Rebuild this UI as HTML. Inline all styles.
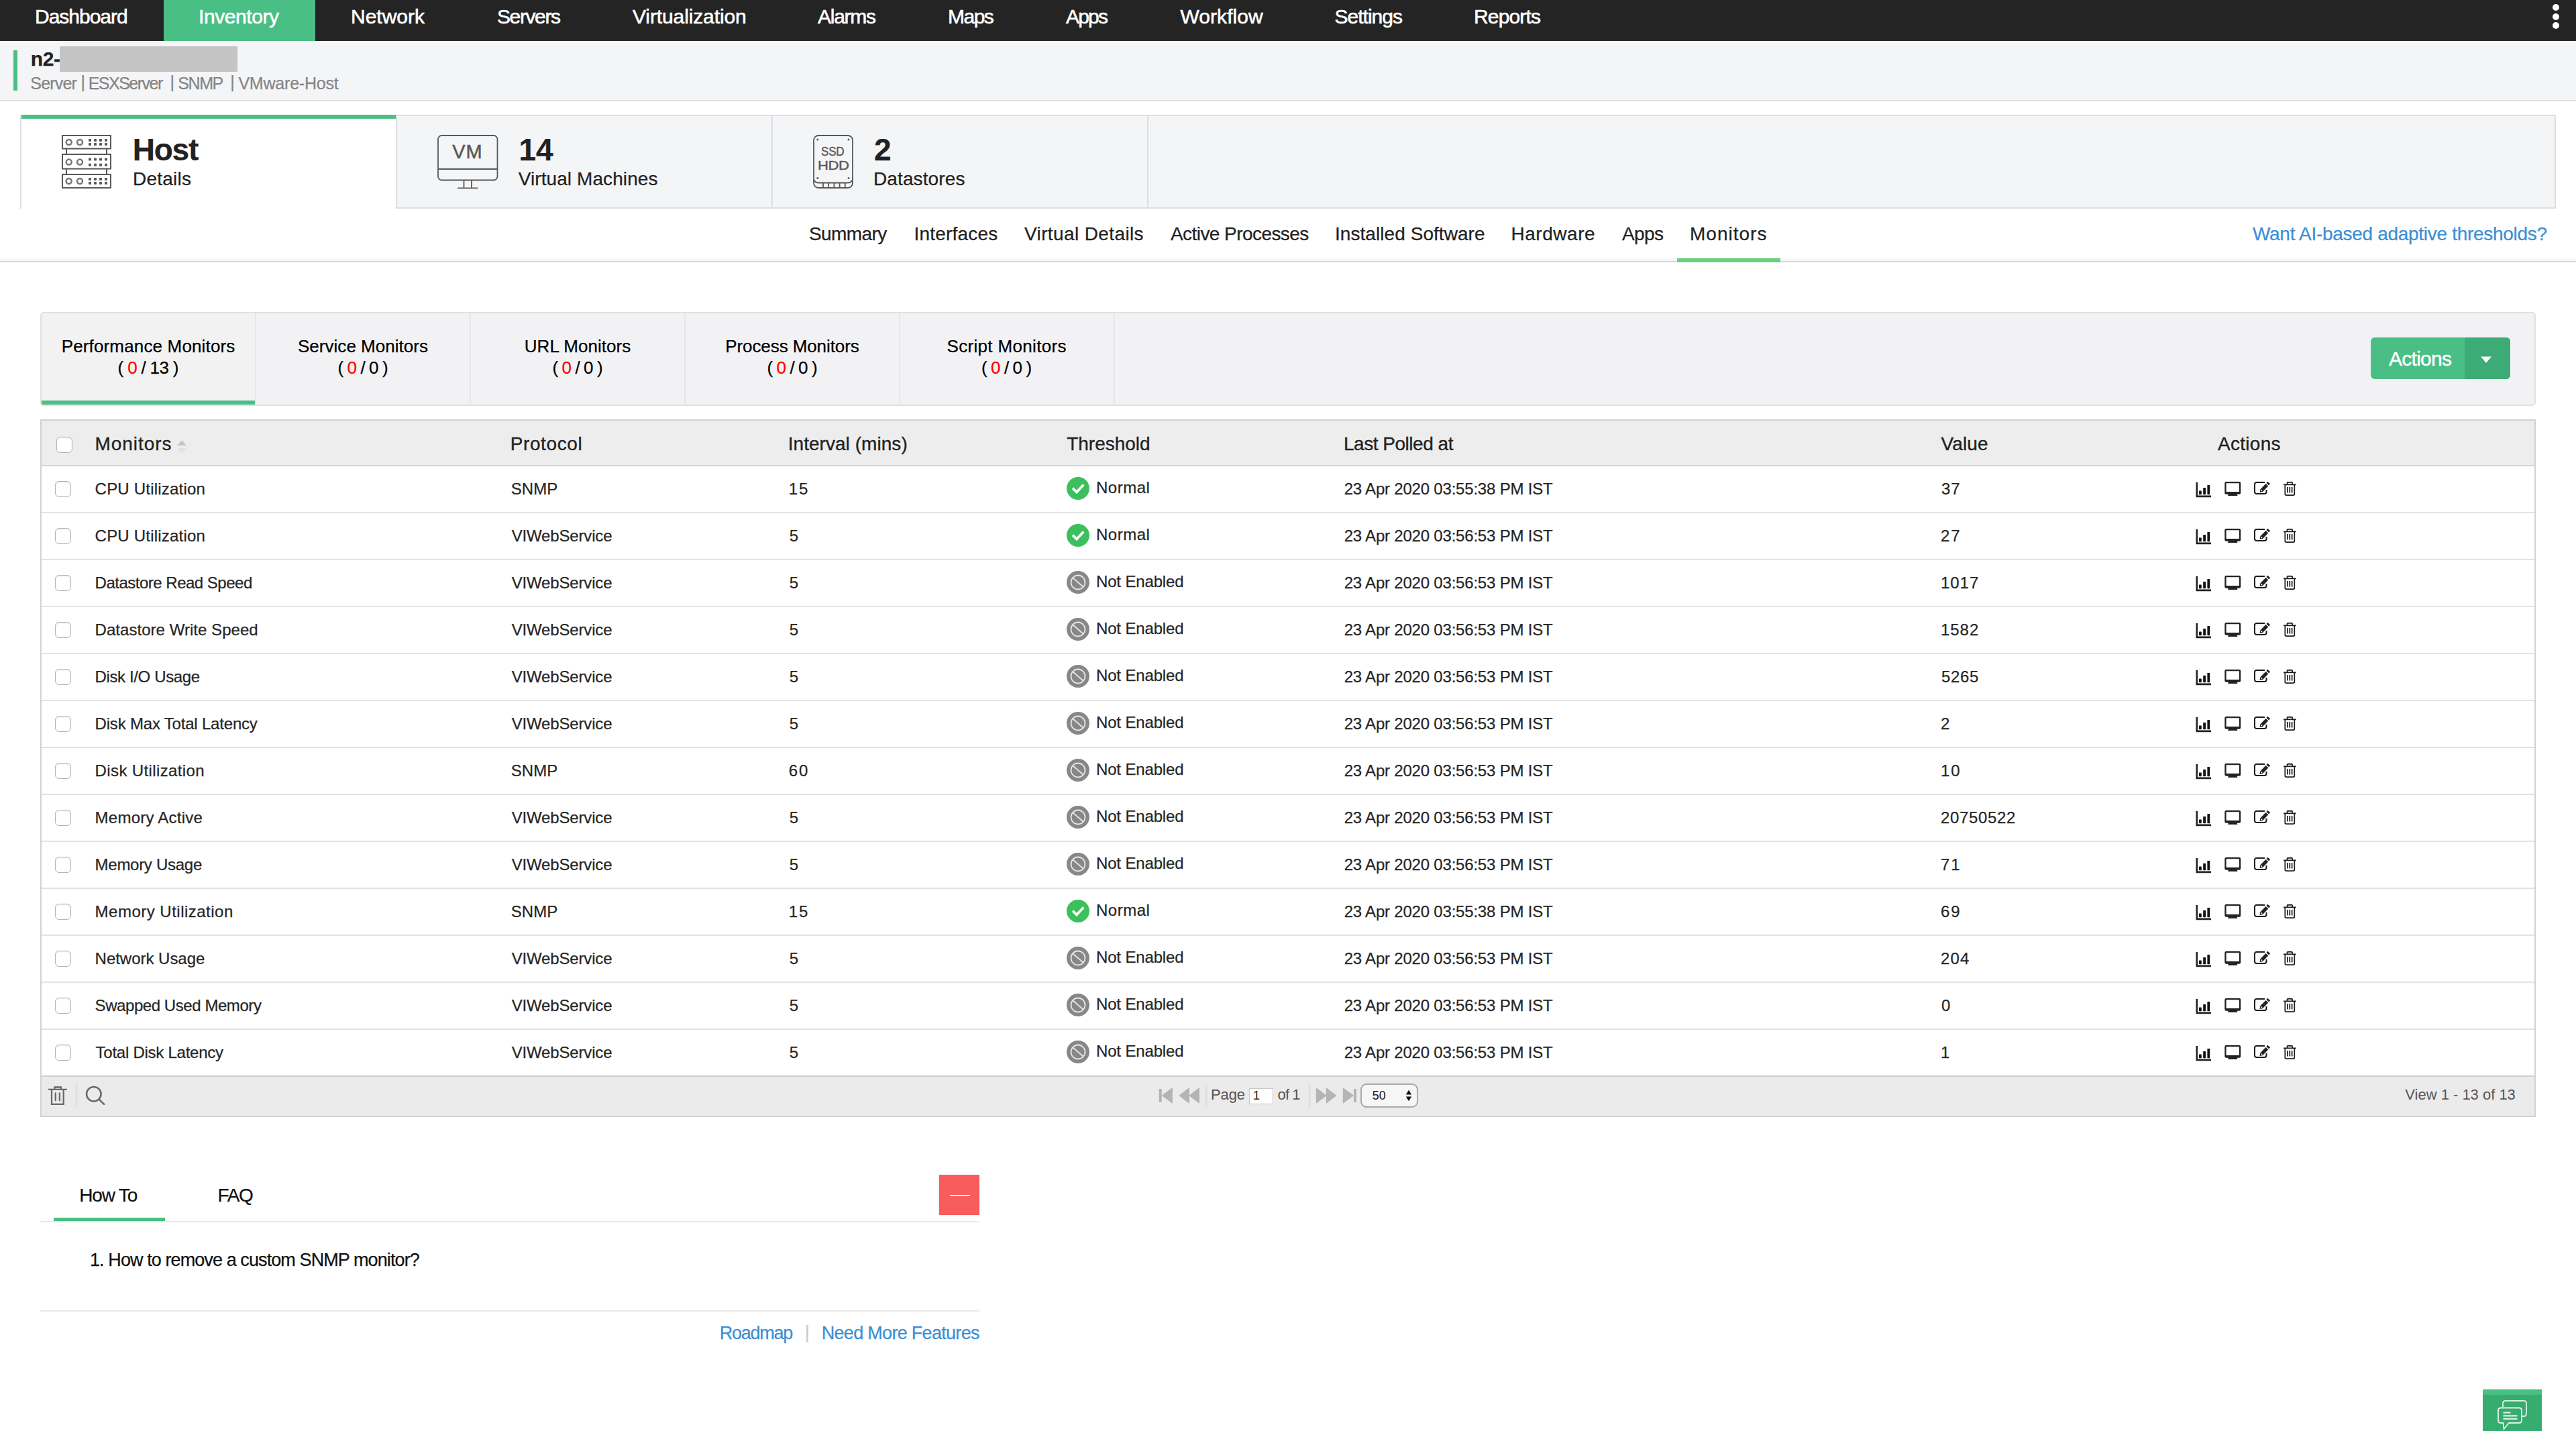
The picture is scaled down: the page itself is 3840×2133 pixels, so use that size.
<!DOCTYPE html>
<html lang="en"><head><meta charset="utf-8"><title>OpManager - Monitors</title><style>
html,body{margin:0;padding:0;}
body{width:3840px;height:2133px;position:relative;overflow:hidden;background:#fff;
font-family:"Liberation Sans",sans-serif;}
.t{position:absolute;white-space:nowrap;-webkit-text-stroke:0.25px currentColor;}
.b{position:absolute;}
svg{display:block;overflow:visible;}
</style></head>
<body>
<nav>
<div class="b" style="left:0px;top:0px;width:3840px;height:61px;background:#242424;"></div>
<div class="b" style="left:244px;top:0px;width:226px;height:61px;background:#4abf85;"></div>
<span class="t" id="t1" style="top:9.61px;font-size:30px;line-height:30px;color:#fff;letter-spacing:-1.010px;left:52.00px;-webkit-text-stroke:0.6px #fff;">Dashboard</span>
<span class="t" id="t2" style="top:9.61px;font-size:30px;line-height:30px;color:#fff;letter-spacing:-0.425px;left:296.00px;-webkit-text-stroke:0.6px #fff;">Inventory</span>
<span class="t" id="t3" style="top:9.61px;font-size:30px;line-height:30px;color:#fff;letter-spacing:-0.004px;left:523.00px;-webkit-text-stroke:0.6px #fff;">Network</span>
<span class="t" id="t4" style="top:9.61px;font-size:30px;line-height:30px;color:#fff;letter-spacing:-1.393px;left:741.00px;-webkit-text-stroke:0.6px #fff;">Servers</span>
<span class="t" id="t5" style="top:9.61px;font-size:30px;line-height:30px;color:#fff;letter-spacing:-0.117px;left:943.00px;-webkit-text-stroke:0.6px #fff;">Virtualization</span>
<span class="t" id="t6" style="top:9.61px;font-size:30px;line-height:30px;color:#fff;letter-spacing:-1.268px;left:1219.00px;-webkit-text-stroke:0.6px #fff;">Alarms</span>
<span class="t" id="t7" style="top:9.61px;font-size:30px;line-height:30px;color:#fff;letter-spacing:-1.520px;left:1413.00px;-webkit-text-stroke:0.6px #fff;">Maps</span>
<span class="t" id="t8" style="top:9.61px;font-size:30px;line-height:30px;color:#fff;letter-spacing:-1.793px;left:1589.00px;-webkit-text-stroke:0.6px #fff;">Apps</span>
<span class="t" id="t9" style="top:9.61px;font-size:30px;line-height:30px;color:#fff;letter-spacing:0.052px;left:1759.50px;-webkit-text-stroke:0.6px #fff;">Workflow</span>
<span class="t" id="t10" style="top:9.61px;font-size:30px;line-height:30px;color:#fff;letter-spacing:-0.985px;left:1989.50px;-webkit-text-stroke:0.6px #fff;">Settings</span>
<span class="t" id="t11" style="top:9.61px;font-size:30px;line-height:30px;color:#fff;letter-spacing:-0.841px;left:2197.00px;-webkit-text-stroke:0.6px #fff;">Reports</span>
<div class="b" style="left:3804.8px;top:5.7px;width:10.6px;height:10.6px;background:#fff;border-radius:50%;"></div>
<div class="b" style="left:3804.8px;top:19.5px;width:10.6px;height:10.6px;background:#fff;border-radius:50%;"></div>
<div class="b" style="left:3804.8px;top:32.9px;width:10.6px;height:10.6px;background:#fff;border-radius:50%;"></div>
</nav>
<header>
<div class="b" style="left:0px;top:61px;width:3840px;height:88px;background:#f4f5f7;"></div>
<div class="b" style="left:0px;top:149px;width:3840px;height:2px;background:#e0e2e5;"></div>
<div class="b" style="left:20px;top:75px;width:6px;height:60px;background:#4abf85;"></div>
<span class="t" id="t12" style="top:73.01px;font-size:30px;line-height:30px;color:#222;font-weight:bold;letter-spacing:-0.355px;left:45.70px;">n2-</span>
<div class="b" style="left:89px;top:69px;width:265px;height:38px;background:#c4c4c4;"></div>
<span class="t" id="t13" style="top:112.04px;font-size:25px;line-height:25px;color:#858585;letter-spacing:-0.802px;left:45.30px;">Server</span>
<span class="t" id="t14" style="top:109.64px;font-size:25px;line-height:25px;color:#858585;left:120.60px;">|</span>
<span class="t" id="t15" style="top:112.04px;font-size:25px;line-height:25px;color:#858585;letter-spacing:-1.504px;left:131.70px;">ESXServer</span>
<span class="t" id="t16" style="top:109.64px;font-size:25px;line-height:25px;color:#858585;left:253.60px;">|</span>
<span class="t" id="t17" style="top:112.04px;font-size:25px;line-height:25px;color:#858585;letter-spacing:-1.418px;left:265.30px;">SNMP</span>
<span class="t" id="t18" style="top:109.64px;font-size:25px;line-height:25px;color:#858585;left:343.20px;">|</span>
<span class="t" id="t19" style="top:112.04px;font-size:25px;line-height:25px;color:#858585;letter-spacing:-0.207px;left:355.40px;">VMware-Host</span>
</header>
<section>
<div class="b" style="left:30px;top:171px;width:3780px;height:140px;background:#f4f5f7;border:2px solid #dcdee1;box-sizing:border-box;"></div>
<div class="b" style="left:30px;top:171px;width:560px;height:140px;background:#fff;border-left:2px solid #dcdee1;box-sizing:border-box;"></div>
<div class="b" style="left:32px;top:171px;width:558px;height:6px;background:#4abf85;"></div>
<div class="b" style="left:590px;top:171px;width:2px;height:140px;background:#dcdee1;"></div>
<div class="b" style="left:1150px;top:173px;width:2px;height:136px;background:#dcdee1;"></div>
<div class="b" style="left:1710px;top:173px;width:2px;height:136px;background:#dcdee1;"></div>
<svg class="b" style="left:91px;top:200px" width="76" height="82" viewBox="-1 -1 76 82" fill="none" stroke="#585858" stroke-width="2"><rect x="1" y="1" width="72" height="19.6"/><circle cx="10.7" cy="11" r="4" stroke="#777" stroke-width="2.500"/><circle cx="27" cy="11" r="4" stroke="#777" stroke-width="2.500"/><rect x="40" y="6" width="4" height="4" rx="1" fill="#585858" stroke="none"/><rect x="40" y="12" width="4" height="4" rx="1" fill="#585858" stroke="none"/><rect x="48" y="6" width="4" height="4" rx="1" fill="#585858" stroke="none"/><rect x="48" y="12" width="4" height="4" rx="1" fill="#585858" stroke="none"/><rect x="56" y="6" width="4" height="4" rx="1" fill="#585858" stroke="none"/><rect x="56" y="12" width="4" height="4" rx="1" fill="#585858" stroke="none"/><rect x="64" y="6" width="4" height="4" rx="1" fill="#585858" stroke="none"/><rect x="64" y="12" width="4" height="4" rx="1" fill="#585858" stroke="none"/><rect x="1" y="29" width="72" height="21.6"/><circle cx="10.7" cy="40.6" r="4" stroke="#777" stroke-width="2.500"/><circle cx="27" cy="40.6" r="4" stroke="#777" stroke-width="2.500"/><rect x="40" y="34.4" width="4" height="4" rx="1" fill="#585858" stroke="none"/><rect x="40" y="42.8" width="4" height="4" rx="1" fill="#585858" stroke="none"/><rect x="48" y="34.4" width="4" height="4" rx="1" fill="#585858" stroke="none"/><rect x="48" y="42.8" width="4" height="4" rx="1" fill="#585858" stroke="none"/><rect x="56" y="34.4" width="4" height="4" rx="1" fill="#585858" stroke="none"/><rect x="56" y="42.8" width="4" height="4" rx="1" fill="#585858" stroke="none"/><rect x="64" y="34.4" width="4" height="4" rx="1" fill="#585858" stroke="none"/><rect x="64" y="42.8" width="4" height="4" rx="1" fill="#585858" stroke="none"/><rect x="1" y="59" width="72" height="20"/><circle cx="10.7" cy="69" r="4" stroke="#777" stroke-width="2.500"/><circle cx="27" cy="69" r="4" stroke="#777" stroke-width="2.500"/><rect x="40" y="64" width="4" height="4" rx="1" fill="#585858" stroke="none"/><rect x="40" y="70" width="4" height="4" rx="1" fill="#585858" stroke="none"/><rect x="48" y="64" width="4" height="4" rx="1" fill="#585858" stroke="none"/><rect x="48" y="70" width="4" height="4" rx="1" fill="#585858" stroke="none"/><rect x="56" y="64" width="4" height="4" rx="1" fill="#585858" stroke="none"/><rect x="56" y="70" width="4" height="4" rx="1" fill="#585858" stroke="none"/><rect x="64" y="64" width="4" height="4" rx="1" fill="#585858" stroke="none"/><rect x="64" y="70" width="4" height="4" rx="1" fill="#585858" stroke="none"/><path d="M7 20.6V29"/><path d="M67 20.6V29"/><path d="M7 50.6V59"/><path d="M67 50.6V59"/></svg>
<span class="t" id="t20" style="top:199.76px;font-size:46px;line-height:46px;color:#222;font-weight:bold;letter-spacing:-1.267px;left:197.80px;">Host</span>
<span class="t" id="t21" style="top:252.70px;font-size:28px;line-height:28px;color:#222;letter-spacing:0.236px;left:198.00px;">Details</span>
<svg class="b" style="left:650px;top:199px" width="96" height="84" viewBox="650 199 96 84" fill="none" stroke="#585858" stroke-width="1.8"><rect x="653" y="202" width="88.5" height="66.5" rx="5.500"/><path d="M653 252H741.5M691.5 268.5V280M703 268.5V280M682 280.3H712.5"/></svg>
<span class="t" id="t22" style="top:211.95px;font-size:29px;line-height:29px;color:#585858;letter-spacing:0.957px;left:674.30px;-webkit-text-stroke:0.5px #585858;">VM</span>
<span class="t" id="t23" style="top:199.76px;font-size:46px;line-height:46px;color:#222;font-weight:bold;letter-spacing:-0.183px;left:773.60px;">14</span>
<span class="t" id="t24" style="top:253.30px;font-size:28px;line-height:28px;color:#222;letter-spacing:0.088px;left:772.70px;">Virtual Machines</span>
<svg class="b" style="left:1210px;top:199px" width="64" height="84" viewBox="1210 199 64 84" fill="none" stroke="#585858" stroke-width="1.8"><rect x="1213" y="202" width="58" height="78" rx="7"/><path d="M1213 268c2 4 5 4.5 8 4.500h42c3 0 6 -0.500 8 -4.500M1227 272.500v7.500M1235.200 272.500v7.500M1243.400 272.500v7.500M1251.600 272.500v7.500M1259.800 272.500v7.500"/><g fill="#585858" stroke="none"><circle cx="1218.800" cy="208" r="1.500"/><circle cx="1265" cy="208" r="1.500"/><circle cx="1218.800" cy="265.600" r="1.500"/><circle cx="1265" cy="265.600" r="1.500"/></g></svg>
<span class="t" id="t25" style="top:216.32px;font-size:19px;line-height:19px;color:#585858;letter-spacing:-0.284px;left:1224.00px;-webkit-text-stroke:0.4px #585858;transform:scaleX(0.9);transform-origin:0 0;">SSD</span>
<span class="t" id="t26" style="top:236.62px;font-size:19px;line-height:19px;color:#585858;letter-spacing:-0.368px;left:1218.50px;-webkit-text-stroke:0.4px #585858;transform:scaleX(1.16);transform-origin:0 0;">HDD</span>
<span class="t" id="t27" style="top:199.76px;font-size:46px;line-height:46px;color:#222;font-weight:bold;left:1303.00px;">2</span>
<span class="t" id="t28" style="top:253.30px;font-size:28px;line-height:28px;color:#222;letter-spacing:0.112px;left:1302.00px;">Datastores</span>
</section>
<section>
<div class="b" style="left:0px;top:383px;width:3840px;height:6px;background:linear-gradient(to bottom,#fff,#f3f3f3);"></div>
<div class="b" style="left:0px;top:389px;width:3840px;height:2px;background:#d8d8d8;"></div>
<div class="b" style="left:2500px;top:385px;width:154px;height:6px;background:#6dcf7e;"></div>
<span class="t" id="t29" style="top:335.30px;font-size:28px;line-height:28px;color:#222;letter-spacing:-0.582px;left:1206.00px;">Summary</span>
<span class="t" id="t30" style="top:335.30px;font-size:28px;line-height:28px;color:#222;letter-spacing:0.183px;left:1362.60px;">Interfaces</span>
<span class="t" id="t31" style="top:335.30px;font-size:28px;line-height:28px;color:#222;letter-spacing:0.384px;left:1527.00px;">Virtual Details</span>
<span class="t" id="t32" style="top:335.30px;font-size:28px;line-height:28px;color:#222;letter-spacing:-0.563px;left:1745.00px;">Active Processes</span>
<span class="t" id="t33" style="top:335.30px;font-size:28px;line-height:28px;color:#222;letter-spacing:0.059px;left:1990.00px;">Installed Software</span>
<span class="t" id="t34" style="top:335.30px;font-size:28px;line-height:28px;color:#222;letter-spacing:0.528px;left:2252.50px;">Hardware</span>
<span class="t" id="t35" style="top:335.30px;font-size:28px;line-height:28px;color:#222;letter-spacing:-0.607px;left:2418.00px;">Apps</span>
<span class="t" id="t36" style="top:335.30px;font-size:28px;line-height:28px;color:#222;letter-spacing:1.005px;left:2519.00px;">Monitors</span>
<span class="t" id="t37" style="top:335.30px;font-size:28px;line-height:28px;color:#3a8fd6;letter-spacing:-0.296px;left:3358.00px;">Want AI-based adaptive thresholds?</span>
</section>
<section>
<div class="b" style="left:60px;top:465px;width:3720px;height:140px;background:#f2f2f4;border:2px solid #e0e0e2;border-radius:5px;box-sizing:border-box;"></div>
<div class="b" style="left:62px;top:467.5px;width:318px;height:130px;background:#f2f2f2;"></div>
<div class="b" style="left:62px;top:597px;width:318px;height:6px;background:#4abf85;"></div>
<div class="b" style="left:380px;top:467px;width:2px;height:135px;background:#e6e6e9;"></div>
<div class="b" style="left:700px;top:467px;width:2px;height:135px;background:#e6e6e9;"></div>
<div class="b" style="left:1020px;top:467px;width:2px;height:135px;background:#e6e6e9;"></div>
<div class="b" style="left:1340px;top:467px;width:2px;height:135px;background:#e6e6e9;"></div>
<div class="b" style="left:1660px;top:467px;width:2px;height:135px;background:#e6e6e9;"></div>
<div class="t" style="top:503.29px;font-size:26px;line-height:26px;color:#000;letter-spacing:0.155px;left:221.08px;width:0;display:flex;justify-content:center;"><span id="t38" style="white-space:nowrap">Performance Monitors</span></div>
<div class="t" style="top:534.79px;font-size:26px;line-height:26px;color:#000;letter-spacing:-0.673px;left:220.66px;width:0;display:flex;justify-content:center;"><span id="t39" style="white-space:nowrap">( <span style="color:#f00">0</span> / 13 )</span></div>
<div class="t" style="top:503.29px;font-size:26px;line-height:26px;color:#000;letter-spacing:0.026px;left:541.01px;width:0;display:flex;justify-content:center;"><span id="t40" style="white-space:nowrap">Service Monitors</span></div>
<div class="t" style="top:534.79px;font-size:26px;line-height:26px;color:#000;letter-spacing:-0.900px;left:540.55px;width:0;display:flex;justify-content:center;"><span id="t41" style="white-space:nowrap">( <span style="color:#f00">0</span> / 0 )</span></div>
<div class="t" style="top:503.29px;font-size:26px;line-height:26px;color:#000;letter-spacing:0.052px;left:861.03px;width:0;display:flex;justify-content:center;"><span id="t42" style="white-space:nowrap">URL Monitors</span></div>
<div class="t" style="top:534.79px;font-size:26px;line-height:26px;color:#000;letter-spacing:-0.900px;left:860.55px;width:0;display:flex;justify-content:center;"><span id="t43" style="white-space:nowrap">( <span style="color:#f00">0</span> / 0 )</span></div>
<div class="t" style="top:503.29px;font-size:26px;line-height:26px;color:#000;letter-spacing:-0.089px;left:1180.96px;width:0;display:flex;justify-content:center;"><span id="t44" style="white-space:nowrap">Process Monitors</span></div>
<div class="t" style="top:534.79px;font-size:26px;line-height:26px;color:#000;letter-spacing:-0.900px;left:1180.55px;width:0;display:flex;justify-content:center;"><span id="t45" style="white-space:nowrap">( <span style="color:#f00">0</span> / 0 )</span></div>
<div class="t" style="top:503.29px;font-size:26px;line-height:26px;color:#000;letter-spacing:0.330px;left:1500.66px;width:0;display:flex;justify-content:center;"><span id="t46" style="white-space:nowrap">Script Monitors</span></div>
<div class="t" style="top:534.79px;font-size:26px;line-height:26px;color:#000;letter-spacing:-0.900px;left:1500.05px;width:0;display:flex;justify-content:center;"><span id="t47" style="white-space:nowrap">( <span style="color:#f00">0</span> / 0 )</span></div>
<div class="b" style="left:3534px;top:503px;width:208px;height:62px;background:#4abf85;border-radius:6px;"></div>
<div class="b" style="left:3674px;top:503px;width:68px;height:62px;background:#3dab76;border-radius:0 6px 6px 0;"></div>
<span class="t" id="t48" style="top:519.61px;font-size:30px;line-height:30px;color:#fff;letter-spacing:-0.730px;left:3561.00px;-webkit-text-stroke:0.45px #fff;">Actions</span>
<svg class="b" style="left:3697px;top:530px" width="18" height="12" viewBox="0 0 18 12"><path d="M1 1.500H17L9 11Z" fill="#fff"/></svg>
</section>
<section>
<div class="b" style="left:60px;top:625px;width:3720px;height:1040px;background:#fff;border:2px solid #d2d2d2;box-sizing:border-box;"></div>
<div class="b" style="left:62px;top:627px;width:3716px;height:66px;background:#ededed;"></div>
<div class="b" style="left:62px;top:693px;width:3716px;height:2px;background:#d4d4d4;"></div>
<span class="t" id="t49" style="top:648.30px;font-size:28px;line-height:28px;color:#222;letter-spacing:0.948px;left:141.50px;-webkit-text-stroke:0.35px #222;">Monitors</span>
<span class="t" id="t50" style="top:648.30px;font-size:28px;line-height:28px;color:#222;letter-spacing:0.615px;left:760.70px;-webkit-text-stroke:0.35px #222;">Protocol</span>
<span class="t" id="t51" style="top:648.30px;font-size:28px;line-height:28px;color:#222;letter-spacing:0.047px;left:1174.70px;-webkit-text-stroke:0.35px #222;">Interval (mins)</span>
<span class="t" id="t52" style="top:648.30px;font-size:28px;line-height:28px;color:#222;letter-spacing:-0.017px;left:1590.20px;-webkit-text-stroke:0.35px #222;">Threshold</span>
<span class="t" id="t53" style="top:648.30px;font-size:28px;line-height:28px;color:#222;letter-spacing:-0.476px;left:2003.00px;-webkit-text-stroke:0.35px #222;">Last Polled at</span>
<span class="t" id="t54" style="top:648.30px;font-size:28px;line-height:28px;color:#222;letter-spacing:0.134px;left:2893.50px;-webkit-text-stroke:0.35px #222;">Value</span>
<span class="t" id="t55" style="top:648.30px;font-size:28px;line-height:28px;color:#222;letter-spacing:0.280px;left:3306.00px;-webkit-text-stroke:0.35px #222;">Actions</span>
<svg class="b" style="left:262px;top:654px" width="18" height="24" viewBox="0 0 18 24"><path d="M2 10L9 2.500L16 10Z" fill="#c4c4c4"/><path d="M2.500 14L9 21.500L15.500 14Z" fill="#e2e2e2"/></svg>
<div class="b" style="left:84px;top:651px;width:24px;height:24px;background:#fff;border:1.5px solid #b4b4b4;border-radius:6px;box-sizing:border-box;box-shadow:inset 0 1px 2px rgba(0,0,0,.10);"></div>
<div class="b" style="left:82px;top:717.3px;width:24px;height:24px;background:#fff;border:1.5px solid #b4b4b4;border-radius:6px;box-sizing:border-box;box-shadow:inset 0 1px 2px rgba(0,0,0,.10);"></div>
<span class="t" id="t56" style="top:716.68px;font-size:24px;line-height:24px;color:#262626;letter-spacing:0.212px;left:141.60px;">CPU Utilization</span>
<span class="t" id="t57" style="top:716.68px;font-size:24px;line-height:24px;color:#262626;letter-spacing:0.056px;left:761.70px;">SNMP</span>
<span class="t" id="t58" style="top:716.68px;font-size:24px;line-height:24px;color:#262626;letter-spacing:1.952px;left:1175.70px;">15</span>
<svg class="b" style="left:1590px;top:711px" width="34" height="34" viewBox="0 0 34 34"><circle cx="17" cy="17" r="17" fill="#3cc05c"/><path d="M9 16.600L15 22.600L25.300 11.600" fill="none" stroke="#fff" stroke-width="3.700"/></svg>
<span class="t" id="t59" style="top:714.98px;font-size:24px;line-height:24px;color:#262626;letter-spacing:0.518px;left:1634.00px;">Normal</span>
<span class="t" id="t60" style="top:716.68px;font-size:24px;line-height:24px;color:#262626;letter-spacing:-0.203px;left:2003.70px;">23 Apr 2020 03:55:38 PM IST</span>
<span class="t" id="t61" style="top:716.68px;font-size:24px;line-height:24px;color:#262626;letter-spacing:0.952px;left:2894.00px;">37</span>
<svg class="b" style="left:3270px;top:714px" width="160" height="30" viewBox="3270 714 160 30" fill="#222"><path d="M3273.500 719h2.600v19.600h19.900v2.600h-22.500z"/><rect x="3278" y="731.500" width="3.800" height="5.700" rx="0.600" fill="#111"/><rect x="3284.200" y="727" width="3.800" height="10.200" rx="0.600" fill="#111"/><rect x="3290.400" y="723" width="3.800" height="14.200" rx="0.600" fill="#111"/><path fill-rule="evenodd" d="M3318.500 718h19.500q2.200 0 2.200 2.200v14.300q0 2.200 -2.200 2.200h-3.300l0.800 2.300h-14.500l0.800 -2.300h-3.300q-2.200 0 -2.200 -2.200v-14.300q0 -2.200 2.200 -2.200zM3318.600 720.200v12.800h19.300v-12.800z"/><path fill="none" stroke="#1c1c1c" stroke-width="2" d="M3376 719h-12q-3 0 -3 3v11q0 3 3 3h11.500q3 0 3 -3v-3"/><path d="M3380.300 717.800l3.800 3.500l-1.900 2.100l-3.800 -3.500zM3377.500 720.900l3.800 3.500l-8.300 8.600l-4.500 1l0.800 -4.500z"/><circle cx="3371.300" cy="731.300" r="1" fill="#fff"/><path fill="none" stroke="#1c1c1c" stroke-width="1.700" d="M3404 722.300h18.700M3409.500 722v-2.400q0 -0.800 0.800 -0.800h6q0.800 0 0.800 0.800v2.400M3406.300 722.500v13.800q0 1.800 1.800 1.800h10.400q1.800 0 1.800 -1.800v-13.800M3410 726v8.500M3413.300 726v8.500M3416.600 726v8.500"/></svg>
<div class="b" style="left:62px;top:763px;width:3716px;height:2px;background:#e3e3e3;"></div>
<div class="b" style="left:82px;top:787.3px;width:24px;height:24px;background:#fff;border:1.5px solid #b4b4b4;border-radius:6px;box-sizing:border-box;box-shadow:inset 0 1px 2px rgba(0,0,0,.10);"></div>
<span class="t" id="t62" style="top:786.68px;font-size:24px;line-height:24px;color:#262626;letter-spacing:0.212px;left:141.60px;">CPU Utilization</span>
<span class="t" id="t63" style="top:786.68px;font-size:24px;line-height:24px;color:#262626;letter-spacing:-0.161px;left:762.70px;">VIWebService</span>
<span class="t" id="t64" style="top:786.68px;font-size:24px;line-height:24px;color:#262626;left:1176.70px;">5</span>
<svg class="b" style="left:1590px;top:781px" width="34" height="34" viewBox="0 0 34 34"><circle cx="17" cy="17" r="17" fill="#3cc05c"/><path d="M9 16.600L15 22.600L25.300 11.600" fill="none" stroke="#fff" stroke-width="3.700"/></svg>
<span class="t" id="t65" style="top:784.98px;font-size:24px;line-height:24px;color:#262626;letter-spacing:0.518px;left:1634.00px;">Normal</span>
<span class="t" id="t66" style="top:786.68px;font-size:24px;line-height:24px;color:#262626;letter-spacing:-0.203px;left:2003.70px;">23 Apr 2020 03:56:53 PM IST</span>
<span class="t" id="t67" style="top:786.68px;font-size:24px;line-height:24px;color:#262626;letter-spacing:1.952px;left:2893.00px;">27</span>
<svg class="b" style="left:3270px;top:784px" width="160" height="30" viewBox="3270 714 160 30" fill="#222"><path d="M3273.500 719h2.600v19.600h19.900v2.600h-22.500z"/><rect x="3278" y="731.500" width="3.800" height="5.700" rx="0.600" fill="#111"/><rect x="3284.200" y="727" width="3.800" height="10.200" rx="0.600" fill="#111"/><rect x="3290.400" y="723" width="3.800" height="14.200" rx="0.600" fill="#111"/><path fill-rule="evenodd" d="M3318.500 718h19.500q2.200 0 2.200 2.200v14.300q0 2.200 -2.200 2.200h-3.300l0.800 2.300h-14.500l0.800 -2.300h-3.300q-2.200 0 -2.200 -2.200v-14.300q0 -2.200 2.200 -2.200zM3318.600 720.200v12.800h19.300v-12.800z"/><path fill="none" stroke="#1c1c1c" stroke-width="2" d="M3376 719h-12q-3 0 -3 3v11q0 3 3 3h11.500q3 0 3 -3v-3"/><path d="M3380.300 717.800l3.800 3.500l-1.900 2.100l-3.800 -3.500zM3377.500 720.900l3.800 3.500l-8.300 8.600l-4.500 1l0.800 -4.500z"/><circle cx="3371.300" cy="731.300" r="1" fill="#fff"/><path fill="none" stroke="#1c1c1c" stroke-width="1.700" d="M3404 722.300h18.700M3409.500 722v-2.400q0 -0.800 0.800 -0.800h6q0.800 0 0.800 0.800v2.400M3406.300 722.500v13.800q0 1.800 1.800 1.800h10.400q1.800 0 1.800 -1.800v-13.800M3410 726v8.500M3413.300 726v8.500M3416.600 726v8.500"/></svg>
<div class="b" style="left:62px;top:833px;width:3716px;height:2px;background:#e3e3e3;"></div>
<div class="b" style="left:82px;top:857.3px;width:24px;height:24px;background:#fff;border:1.5px solid #b4b4b4;border-radius:6px;box-sizing:border-box;box-shadow:inset 0 1px 2px rgba(0,0,0,.10);"></div>
<span class="t" id="t68" style="top:856.68px;font-size:24px;line-height:24px;color:#262626;letter-spacing:-0.501px;left:141.60px;">Datastore Read Speed</span>
<span class="t" id="t69" style="top:856.68px;font-size:24px;line-height:24px;color:#262626;letter-spacing:-0.161px;left:762.70px;">VIWebService</span>
<span class="t" id="t70" style="top:856.68px;font-size:24px;line-height:24px;color:#262626;left:1176.70px;">5</span>
<svg class="b" style="left:1590px;top:851px" width="34" height="34" viewBox="0 0 34 34"><circle cx="17" cy="17" r="17" fill="#878787"/><circle cx="17" cy="17" r="10.500" fill="none" stroke="#e4e4e4" stroke-width="1.800"/><path d="M9.500 10.500L24.500 23.500" stroke="#e4e4e4" stroke-width="1.800"/></svg>
<span class="t" id="t71" style="top:854.98px;font-size:24px;line-height:24px;color:#262626;letter-spacing:-0.155px;left:1634.00px;">Not Enabled</span>
<span class="t" id="t72" style="top:856.68px;font-size:24px;line-height:24px;color:#262626;letter-spacing:-0.203px;left:2003.70px;">23 Apr 2020 03:56:53 PM IST</span>
<span class="t" id="t73" style="top:856.68px;font-size:24px;line-height:24px;color:#262626;letter-spacing:0.952px;left:2893.00px;">1017</span>
<svg class="b" style="left:3270px;top:854px" width="160" height="30" viewBox="3270 714 160 30" fill="#222"><path d="M3273.500 719h2.600v19.600h19.900v2.600h-22.500z"/><rect x="3278" y="731.500" width="3.800" height="5.700" rx="0.600" fill="#111"/><rect x="3284.200" y="727" width="3.800" height="10.200" rx="0.600" fill="#111"/><rect x="3290.400" y="723" width="3.800" height="14.200" rx="0.600" fill="#111"/><path fill-rule="evenodd" d="M3318.500 718h19.500q2.200 0 2.200 2.200v14.300q0 2.200 -2.200 2.200h-3.300l0.800 2.300h-14.500l0.800 -2.300h-3.300q-2.200 0 -2.200 -2.200v-14.300q0 -2.200 2.200 -2.200zM3318.600 720.200v12.800h19.300v-12.800z"/><path fill="none" stroke="#1c1c1c" stroke-width="2" d="M3376 719h-12q-3 0 -3 3v11q0 3 3 3h11.500q3 0 3 -3v-3"/><path d="M3380.300 717.800l3.800 3.500l-1.900 2.100l-3.800 -3.500zM3377.500 720.900l3.800 3.500l-8.300 8.600l-4.500 1l0.800 -4.500z"/><circle cx="3371.300" cy="731.300" r="1" fill="#fff"/><path fill="none" stroke="#1c1c1c" stroke-width="1.700" d="M3404 722.300h18.700M3409.500 722v-2.400q0 -0.800 0.800 -0.800h6q0.800 0 0.800 0.800v2.400M3406.300 722.500v13.800q0 1.800 1.800 1.800h10.400q1.800 0 1.800 -1.800v-13.800M3410 726v8.500M3413.300 726v8.500M3416.600 726v8.500"/></svg>
<div class="b" style="left:62px;top:903px;width:3716px;height:2px;background:#e3e3e3;"></div>
<div class="b" style="left:82px;top:927.3px;width:24px;height:24px;background:#fff;border:1.5px solid #b4b4b4;border-radius:6px;box-sizing:border-box;box-shadow:inset 0 1px 2px rgba(0,0,0,.10);"></div>
<span class="t" id="t74" style="top:926.68px;font-size:24px;line-height:24px;color:#262626;letter-spacing:0.035px;left:141.60px;">Datastore Write Speed</span>
<span class="t" id="t75" style="top:926.68px;font-size:24px;line-height:24px;color:#262626;letter-spacing:-0.161px;left:762.70px;">VIWebService</span>
<span class="t" id="t76" style="top:926.68px;font-size:24px;line-height:24px;color:#262626;left:1176.70px;">5</span>
<svg class="b" style="left:1590px;top:921px" width="34" height="34" viewBox="0 0 34 34"><circle cx="17" cy="17" r="17" fill="#878787"/><circle cx="17" cy="17" r="10.500" fill="none" stroke="#e4e4e4" stroke-width="1.800"/><path d="M9.500 10.500L24.500 23.500" stroke="#e4e4e4" stroke-width="1.800"/></svg>
<span class="t" id="t77" style="top:924.98px;font-size:24px;line-height:24px;color:#262626;letter-spacing:-0.155px;left:1634.00px;">Not Enabled</span>
<span class="t" id="t78" style="top:926.68px;font-size:24px;line-height:24px;color:#262626;letter-spacing:-0.203px;left:2003.70px;">23 Apr 2020 03:56:53 PM IST</span>
<span class="t" id="t79" style="top:926.68px;font-size:24px;line-height:24px;color:#262626;letter-spacing:0.952px;left:2893.00px;">1582</span>
<svg class="b" style="left:3270px;top:924px" width="160" height="30" viewBox="3270 714 160 30" fill="#222"><path d="M3273.500 719h2.600v19.600h19.900v2.600h-22.500z"/><rect x="3278" y="731.500" width="3.800" height="5.700" rx="0.600" fill="#111"/><rect x="3284.200" y="727" width="3.800" height="10.200" rx="0.600" fill="#111"/><rect x="3290.400" y="723" width="3.800" height="14.200" rx="0.600" fill="#111"/><path fill-rule="evenodd" d="M3318.500 718h19.500q2.200 0 2.200 2.200v14.300q0 2.200 -2.200 2.200h-3.300l0.800 2.300h-14.500l0.800 -2.300h-3.300q-2.200 0 -2.200 -2.200v-14.300q0 -2.200 2.200 -2.200zM3318.600 720.200v12.800h19.300v-12.800z"/><path fill="none" stroke="#1c1c1c" stroke-width="2" d="M3376 719h-12q-3 0 -3 3v11q0 3 3 3h11.500q3 0 3 -3v-3"/><path d="M3380.300 717.800l3.800 3.500l-1.900 2.100l-3.800 -3.500zM3377.500 720.900l3.800 3.500l-8.300 8.600l-4.500 1l0.800 -4.500z"/><circle cx="3371.300" cy="731.300" r="1" fill="#fff"/><path fill="none" stroke="#1c1c1c" stroke-width="1.700" d="M3404 722.300h18.700M3409.500 722v-2.400q0 -0.800 0.800 -0.800h6q0.800 0 0.800 0.800v2.400M3406.300 722.500v13.800q0 1.800 1.800 1.800h10.400q1.800 0 1.800 -1.800v-13.800M3410 726v8.500M3413.300 726v8.500M3416.600 726v8.500"/></svg>
<div class="b" style="left:62px;top:973px;width:3716px;height:2px;background:#e3e3e3;"></div>
<div class="b" style="left:82px;top:997.3px;width:24px;height:24px;background:#fff;border:1.5px solid #b4b4b4;border-radius:6px;box-sizing:border-box;box-shadow:inset 0 1px 2px rgba(0,0,0,.10);"></div>
<span class="t" id="t80" style="top:996.68px;font-size:24px;line-height:24px;color:#262626;letter-spacing:-0.379px;left:141.60px;">Disk I/O Usage</span>
<span class="t" id="t81" style="top:996.68px;font-size:24px;line-height:24px;color:#262626;letter-spacing:-0.161px;left:762.70px;">VIWebService</span>
<span class="t" id="t82" style="top:996.68px;font-size:24px;line-height:24px;color:#262626;left:1176.70px;">5</span>
<svg class="b" style="left:1590px;top:991px" width="34" height="34" viewBox="0 0 34 34"><circle cx="17" cy="17" r="17" fill="#878787"/><circle cx="17" cy="17" r="10.500" fill="none" stroke="#e4e4e4" stroke-width="1.800"/><path d="M9.500 10.500L24.500 23.500" stroke="#e4e4e4" stroke-width="1.800"/></svg>
<span class="t" id="t83" style="top:994.98px;font-size:24px;line-height:24px;color:#262626;letter-spacing:-0.155px;left:1634.00px;">Not Enabled</span>
<span class="t" id="t84" style="top:996.68px;font-size:24px;line-height:24px;color:#262626;letter-spacing:-0.203px;left:2003.70px;">23 Apr 2020 03:56:53 PM IST</span>
<span class="t" id="t85" style="top:996.68px;font-size:24px;line-height:24px;color:#262626;letter-spacing:0.619px;left:2894.00px;">5265</span>
<svg class="b" style="left:3270px;top:994px" width="160" height="30" viewBox="3270 714 160 30" fill="#222"><path d="M3273.500 719h2.600v19.600h19.900v2.600h-22.500z"/><rect x="3278" y="731.500" width="3.800" height="5.700" rx="0.600" fill="#111"/><rect x="3284.200" y="727" width="3.800" height="10.200" rx="0.600" fill="#111"/><rect x="3290.400" y="723" width="3.800" height="14.200" rx="0.600" fill="#111"/><path fill-rule="evenodd" d="M3318.500 718h19.500q2.200 0 2.200 2.200v14.300q0 2.200 -2.200 2.200h-3.300l0.800 2.300h-14.500l0.800 -2.300h-3.300q-2.200 0 -2.200 -2.200v-14.300q0 -2.200 2.200 -2.200zM3318.600 720.200v12.800h19.300v-12.800z"/><path fill="none" stroke="#1c1c1c" stroke-width="2" d="M3376 719h-12q-3 0 -3 3v11q0 3 3 3h11.500q3 0 3 -3v-3"/><path d="M3380.300 717.800l3.800 3.500l-1.900 2.100l-3.800 -3.500zM3377.500 720.900l3.800 3.500l-8.300 8.600l-4.500 1l0.800 -4.500z"/><circle cx="3371.300" cy="731.300" r="1" fill="#fff"/><path fill="none" stroke="#1c1c1c" stroke-width="1.700" d="M3404 722.300h18.700M3409.500 722v-2.400q0 -0.800 0.800 -0.800h6q0.800 0 0.800 0.800v2.400M3406.300 722.500v13.800q0 1.800 1.800 1.800h10.400q1.800 0 1.800 -1.800v-13.800M3410 726v8.500M3413.300 726v8.500M3416.600 726v8.500"/></svg>
<div class="b" style="left:62px;top:1043px;width:3716px;height:2px;background:#e3e3e3;"></div>
<div class="b" style="left:82px;top:1067.3px;width:24px;height:24px;background:#fff;border:1.5px solid #b4b4b4;border-radius:6px;box-sizing:border-box;box-shadow:inset 0 1px 2px rgba(0,0,0,.10);"></div>
<span class="t" id="t86" style="top:1066.68px;font-size:24px;line-height:24px;color:#262626;letter-spacing:-0.193px;left:141.60px;">Disk Max Total Latency</span>
<span class="t" id="t87" style="top:1066.68px;font-size:24px;line-height:24px;color:#262626;letter-spacing:-0.161px;left:762.70px;">VIWebService</span>
<span class="t" id="t88" style="top:1066.68px;font-size:24px;line-height:24px;color:#262626;left:1176.70px;">5</span>
<svg class="b" style="left:1590px;top:1061px" width="34" height="34" viewBox="0 0 34 34"><circle cx="17" cy="17" r="17" fill="#878787"/><circle cx="17" cy="17" r="10.500" fill="none" stroke="#e4e4e4" stroke-width="1.800"/><path d="M9.500 10.500L24.500 23.500" stroke="#e4e4e4" stroke-width="1.800"/></svg>
<span class="t" id="t89" style="top:1064.98px;font-size:24px;line-height:24px;color:#262626;letter-spacing:-0.155px;left:1634.00px;">Not Enabled</span>
<span class="t" id="t90" style="top:1066.68px;font-size:24px;line-height:24px;color:#262626;letter-spacing:-0.203px;left:2003.70px;">23 Apr 2020 03:56:53 PM IST</span>
<span class="t" id="t91" style="top:1066.68px;font-size:24px;line-height:24px;color:#262626;left:2893.00px;">2</span>
<svg class="b" style="left:3270px;top:1064px" width="160" height="30" viewBox="3270 714 160 30" fill="#222"><path d="M3273.500 719h2.600v19.600h19.900v2.600h-22.500z"/><rect x="3278" y="731.500" width="3.800" height="5.700" rx="0.600" fill="#111"/><rect x="3284.200" y="727" width="3.800" height="10.200" rx="0.600" fill="#111"/><rect x="3290.400" y="723" width="3.800" height="14.200" rx="0.600" fill="#111"/><path fill-rule="evenodd" d="M3318.500 718h19.500q2.200 0 2.200 2.200v14.300q0 2.200 -2.200 2.200h-3.300l0.800 2.300h-14.500l0.800 -2.300h-3.300q-2.200 0 -2.200 -2.200v-14.300q0 -2.200 2.200 -2.200zM3318.600 720.200v12.800h19.300v-12.800z"/><path fill="none" stroke="#1c1c1c" stroke-width="2" d="M3376 719h-12q-3 0 -3 3v11q0 3 3 3h11.500q3 0 3 -3v-3"/><path d="M3380.300 717.800l3.800 3.500l-1.900 2.100l-3.800 -3.500zM3377.500 720.900l3.800 3.500l-8.300 8.600l-4.500 1l0.800 -4.500z"/><circle cx="3371.300" cy="731.300" r="1" fill="#fff"/><path fill="none" stroke="#1c1c1c" stroke-width="1.700" d="M3404 722.300h18.700M3409.500 722v-2.400q0 -0.800 0.800 -0.800h6q0.800 0 0.800 0.800v2.400M3406.300 722.500v13.800q0 1.800 1.800 1.800h10.400q1.800 0 1.800 -1.800v-13.800M3410 726v8.500M3413.300 726v8.500M3416.600 726v8.500"/></svg>
<div class="b" style="left:62px;top:1113px;width:3716px;height:2px;background:#e3e3e3;"></div>
<div class="b" style="left:82px;top:1137.3px;width:24px;height:24px;background:#fff;border:1.5px solid #b4b4b4;border-radius:6px;box-sizing:border-box;box-shadow:inset 0 1px 2px rgba(0,0,0,.10);"></div>
<span class="t" id="t92" style="top:1136.68px;font-size:24px;line-height:24px;color:#262626;letter-spacing:0.378px;left:141.60px;">Disk Utilization</span>
<span class="t" id="t93" style="top:1136.68px;font-size:24px;line-height:24px;color:#262626;letter-spacing:0.056px;left:761.70px;">SNMP</span>
<span class="t" id="t94" style="top:1136.68px;font-size:24px;line-height:24px;color:#262626;letter-spacing:1.952px;left:1175.70px;">60</span>
<svg class="b" style="left:1590px;top:1131px" width="34" height="34" viewBox="0 0 34 34"><circle cx="17" cy="17" r="17" fill="#878787"/><circle cx="17" cy="17" r="10.500" fill="none" stroke="#e4e4e4" stroke-width="1.800"/><path d="M9.500 10.500L24.500 23.500" stroke="#e4e4e4" stroke-width="1.800"/></svg>
<span class="t" id="t95" style="top:1134.98px;font-size:24px;line-height:24px;color:#262626;letter-spacing:-0.155px;left:1634.00px;">Not Enabled</span>
<span class="t" id="t96" style="top:1136.68px;font-size:24px;line-height:24px;color:#262626;letter-spacing:-0.203px;left:2003.70px;">23 Apr 2020 03:56:53 PM IST</span>
<span class="t" id="t97" style="top:1136.68px;font-size:24px;line-height:24px;color:#262626;letter-spacing:1.952px;left:2893.00px;">10</span>
<svg class="b" style="left:3270px;top:1134px" width="160" height="30" viewBox="3270 714 160 30" fill="#222"><path d="M3273.500 719h2.600v19.600h19.900v2.600h-22.500z"/><rect x="3278" y="731.500" width="3.800" height="5.700" rx="0.600" fill="#111"/><rect x="3284.200" y="727" width="3.800" height="10.200" rx="0.600" fill="#111"/><rect x="3290.400" y="723" width="3.800" height="14.200" rx="0.600" fill="#111"/><path fill-rule="evenodd" d="M3318.500 718h19.500q2.200 0 2.200 2.200v14.300q0 2.200 -2.200 2.200h-3.300l0.800 2.300h-14.500l0.800 -2.300h-3.300q-2.200 0 -2.200 -2.200v-14.300q0 -2.200 2.200 -2.200zM3318.600 720.200v12.800h19.300v-12.800z"/><path fill="none" stroke="#1c1c1c" stroke-width="2" d="M3376 719h-12q-3 0 -3 3v11q0 3 3 3h11.500q3 0 3 -3v-3"/><path d="M3380.300 717.800l3.800 3.500l-1.900 2.100l-3.800 -3.500zM3377.500 720.900l3.800 3.500l-8.300 8.600l-4.500 1l0.800 -4.500z"/><circle cx="3371.300" cy="731.300" r="1" fill="#fff"/><path fill="none" stroke="#1c1c1c" stroke-width="1.700" d="M3404 722.300h18.700M3409.500 722v-2.400q0 -0.800 0.800 -0.800h6q0.800 0 0.800 0.800v2.400M3406.300 722.500v13.800q0 1.800 1.800 1.800h10.400q1.800 0 1.800 -1.800v-13.800M3410 726v8.500M3413.300 726v8.500M3416.600 726v8.500"/></svg>
<div class="b" style="left:62px;top:1183px;width:3716px;height:2px;background:#e3e3e3;"></div>
<div class="b" style="left:82px;top:1207.3px;width:24px;height:24px;background:#fff;border:1.5px solid #b4b4b4;border-radius:6px;box-sizing:border-box;box-shadow:inset 0 1px 2px rgba(0,0,0,.10);"></div>
<span class="t" id="t98" style="top:1206.68px;font-size:24px;line-height:24px;color:#262626;letter-spacing:0.246px;left:141.60px;">Memory Active</span>
<span class="t" id="t99" style="top:1206.68px;font-size:24px;line-height:24px;color:#262626;letter-spacing:-0.161px;left:762.70px;">VIWebService</span>
<span class="t" id="t100" style="top:1206.68px;font-size:24px;line-height:24px;color:#262626;left:1176.70px;">5</span>
<svg class="b" style="left:1590px;top:1201px" width="34" height="34" viewBox="0 0 34 34"><circle cx="17" cy="17" r="17" fill="#878787"/><circle cx="17" cy="17" r="10.500" fill="none" stroke="#e4e4e4" stroke-width="1.800"/><path d="M9.500 10.500L24.500 23.500" stroke="#e4e4e4" stroke-width="1.800"/></svg>
<span class="t" id="t101" style="top:1204.98px;font-size:24px;line-height:24px;color:#262626;letter-spacing:-0.155px;left:1634.00px;">Not Enabled</span>
<span class="t" id="t102" style="top:1206.68px;font-size:24px;line-height:24px;color:#262626;letter-spacing:-0.203px;left:2003.70px;">23 Apr 2020 03:56:53 PM IST</span>
<span class="t" id="t103" style="top:1206.68px;font-size:24px;line-height:24px;color:#262626;letter-spacing:0.667px;left:2893.00px;">20750522</span>
<svg class="b" style="left:3270px;top:1204px" width="160" height="30" viewBox="3270 714 160 30" fill="#222"><path d="M3273.500 719h2.600v19.600h19.900v2.600h-22.500z"/><rect x="3278" y="731.500" width="3.800" height="5.700" rx="0.600" fill="#111"/><rect x="3284.200" y="727" width="3.800" height="10.200" rx="0.600" fill="#111"/><rect x="3290.400" y="723" width="3.800" height="14.200" rx="0.600" fill="#111"/><path fill-rule="evenodd" d="M3318.500 718h19.500q2.200 0 2.200 2.200v14.300q0 2.200 -2.200 2.200h-3.300l0.800 2.300h-14.500l0.800 -2.300h-3.300q-2.200 0 -2.200 -2.200v-14.300q0 -2.200 2.200 -2.200zM3318.600 720.200v12.800h19.300v-12.800z"/><path fill="none" stroke="#1c1c1c" stroke-width="2" d="M3376 719h-12q-3 0 -3 3v11q0 3 3 3h11.500q3 0 3 -3v-3"/><path d="M3380.300 717.800l3.800 3.500l-1.900 2.100l-3.800 -3.500zM3377.500 720.900l3.800 3.500l-8.300 8.600l-4.500 1l0.800 -4.500z"/><circle cx="3371.300" cy="731.300" r="1" fill="#fff"/><path fill="none" stroke="#1c1c1c" stroke-width="1.700" d="M3404 722.300h18.700M3409.500 722v-2.400q0 -0.800 0.800 -0.800h6q0.800 0 0.800 0.800v2.400M3406.300 722.500v13.800q0 1.800 1.800 1.800h10.400q1.800 0 1.800 -1.800v-13.800M3410 726v8.500M3413.300 726v8.500M3416.600 726v8.500"/></svg>
<div class="b" style="left:62px;top:1253px;width:3716px;height:2px;background:#e3e3e3;"></div>
<div class="b" style="left:82px;top:1277.3px;width:24px;height:24px;background:#fff;border:1.5px solid #b4b4b4;border-radius:6px;box-sizing:border-box;box-shadow:inset 0 1px 2px rgba(0,0,0,.10);"></div>
<span class="t" id="t104" style="top:1276.68px;font-size:24px;line-height:24px;color:#262626;letter-spacing:-0.279px;left:141.60px;">Memory Usage</span>
<span class="t" id="t105" style="top:1276.68px;font-size:24px;line-height:24px;color:#262626;letter-spacing:-0.161px;left:762.70px;">VIWebService</span>
<span class="t" id="t106" style="top:1276.68px;font-size:24px;line-height:24px;color:#262626;left:1176.70px;">5</span>
<svg class="b" style="left:1590px;top:1271px" width="34" height="34" viewBox="0 0 34 34"><circle cx="17" cy="17" r="17" fill="#878787"/><circle cx="17" cy="17" r="10.500" fill="none" stroke="#e4e4e4" stroke-width="1.800"/><path d="M9.500 10.500L24.500 23.500" stroke="#e4e4e4" stroke-width="1.800"/></svg>
<span class="t" id="t107" style="top:1274.98px;font-size:24px;line-height:24px;color:#262626;letter-spacing:-0.155px;left:1634.00px;">Not Enabled</span>
<span class="t" id="t108" style="top:1276.68px;font-size:24px;line-height:24px;color:#262626;letter-spacing:-0.203px;left:2003.70px;">23 Apr 2020 03:56:53 PM IST</span>
<span class="t" id="t109" style="top:1276.68px;font-size:24px;line-height:24px;color:#262626;letter-spacing:1.952px;left:2893.00px;">71</span>
<svg class="b" style="left:3270px;top:1274px" width="160" height="30" viewBox="3270 714 160 30" fill="#222"><path d="M3273.500 719h2.600v19.600h19.900v2.600h-22.500z"/><rect x="3278" y="731.500" width="3.800" height="5.700" rx="0.600" fill="#111"/><rect x="3284.200" y="727" width="3.800" height="10.200" rx="0.600" fill="#111"/><rect x="3290.400" y="723" width="3.800" height="14.200" rx="0.600" fill="#111"/><path fill-rule="evenodd" d="M3318.500 718h19.500q2.200 0 2.200 2.200v14.300q0 2.200 -2.200 2.200h-3.300l0.800 2.300h-14.500l0.800 -2.300h-3.300q-2.200 0 -2.200 -2.200v-14.300q0 -2.200 2.200 -2.200zM3318.600 720.200v12.800h19.300v-12.800z"/><path fill="none" stroke="#1c1c1c" stroke-width="2" d="M3376 719h-12q-3 0 -3 3v11q0 3 3 3h11.500q3 0 3 -3v-3"/><path d="M3380.300 717.800l3.800 3.500l-1.900 2.100l-3.800 -3.500zM3377.500 720.900l3.800 3.500l-8.300 8.600l-4.500 1l0.800 -4.500z"/><circle cx="3371.300" cy="731.300" r="1" fill="#fff"/><path fill="none" stroke="#1c1c1c" stroke-width="1.700" d="M3404 722.300h18.700M3409.500 722v-2.400q0 -0.800 0.800 -0.800h6q0.800 0 0.800 0.800v2.400M3406.300 722.500v13.800q0 1.800 1.800 1.800h10.400q1.800 0 1.800 -1.800v-13.800M3410 726v8.500M3413.300 726v8.500M3416.600 726v8.500"/></svg>
<div class="b" style="left:62px;top:1323px;width:3716px;height:2px;background:#e3e3e3;"></div>
<div class="b" style="left:82px;top:1347.3px;width:24px;height:24px;background:#fff;border:1.5px solid #b4b4b4;border-radius:6px;box-sizing:border-box;box-shadow:inset 0 1px 2px rgba(0,0,0,.10);"></div>
<span class="t" id="t110" style="top:1346.68px;font-size:24px;line-height:24px;color:#262626;letter-spacing:0.486px;left:141.60px;">Memory Utilization</span>
<span class="t" id="t111" style="top:1346.68px;font-size:24px;line-height:24px;color:#262626;letter-spacing:0.056px;left:761.70px;">SNMP</span>
<span class="t" id="t112" style="top:1346.68px;font-size:24px;line-height:24px;color:#262626;letter-spacing:1.952px;left:1175.70px;">15</span>
<svg class="b" style="left:1590px;top:1341px" width="34" height="34" viewBox="0 0 34 34"><circle cx="17" cy="17" r="17" fill="#3cc05c"/><path d="M9 16.600L15 22.600L25.300 11.600" fill="none" stroke="#fff" stroke-width="3.700"/></svg>
<span class="t" id="t113" style="top:1344.98px;font-size:24px;line-height:24px;color:#262626;letter-spacing:0.518px;left:1634.00px;">Normal</span>
<span class="t" id="t114" style="top:1346.68px;font-size:24px;line-height:24px;color:#262626;letter-spacing:-0.203px;left:2003.70px;">23 Apr 2020 03:55:38 PM IST</span>
<span class="t" id="t115" style="top:1346.68px;font-size:24px;line-height:24px;color:#262626;letter-spacing:1.952px;left:2893.00px;">69</span>
<svg class="b" style="left:3270px;top:1344px" width="160" height="30" viewBox="3270 714 160 30" fill="#222"><path d="M3273.500 719h2.600v19.600h19.900v2.600h-22.500z"/><rect x="3278" y="731.500" width="3.800" height="5.700" rx="0.600" fill="#111"/><rect x="3284.200" y="727" width="3.800" height="10.200" rx="0.600" fill="#111"/><rect x="3290.400" y="723" width="3.800" height="14.200" rx="0.600" fill="#111"/><path fill-rule="evenodd" d="M3318.500 718h19.500q2.200 0 2.200 2.200v14.300q0 2.200 -2.200 2.200h-3.300l0.800 2.300h-14.500l0.800 -2.300h-3.300q-2.200 0 -2.200 -2.200v-14.300q0 -2.200 2.200 -2.200zM3318.600 720.200v12.800h19.300v-12.800z"/><path fill="none" stroke="#1c1c1c" stroke-width="2" d="M3376 719h-12q-3 0 -3 3v11q0 3 3 3h11.500q3 0 3 -3v-3"/><path d="M3380.300 717.800l3.800 3.500l-1.900 2.100l-3.800 -3.500zM3377.500 720.900l3.800 3.500l-8.300 8.600l-4.500 1l0.800 -4.500z"/><circle cx="3371.300" cy="731.300" r="1" fill="#fff"/><path fill="none" stroke="#1c1c1c" stroke-width="1.700" d="M3404 722.300h18.700M3409.500 722v-2.400q0 -0.800 0.800 -0.800h6q0.800 0 0.800 0.800v2.400M3406.300 722.500v13.800q0 1.800 1.800 1.800h10.400q1.800 0 1.800 -1.800v-13.800M3410 726v8.500M3413.300 726v8.500M3416.600 726v8.500"/></svg>
<div class="b" style="left:62px;top:1393px;width:3716px;height:2px;background:#e3e3e3;"></div>
<div class="b" style="left:82px;top:1417.3px;width:24px;height:24px;background:#fff;border:1.5px solid #b4b4b4;border-radius:6px;box-sizing:border-box;box-shadow:inset 0 1px 2px rgba(0,0,0,.10);"></div>
<span class="t" id="t116" style="top:1416.68px;font-size:24px;line-height:24px;color:#262626;letter-spacing:-0.026px;left:141.60px;">Network Usage</span>
<span class="t" id="t117" style="top:1416.68px;font-size:24px;line-height:24px;color:#262626;letter-spacing:-0.161px;left:762.70px;">VIWebService</span>
<span class="t" id="t118" style="top:1416.68px;font-size:24px;line-height:24px;color:#262626;left:1176.70px;">5</span>
<svg class="b" style="left:1590px;top:1411px" width="34" height="34" viewBox="0 0 34 34"><circle cx="17" cy="17" r="17" fill="#878787"/><circle cx="17" cy="17" r="10.500" fill="none" stroke="#e4e4e4" stroke-width="1.800"/><path d="M9.500 10.500L24.500 23.500" stroke="#e4e4e4" stroke-width="1.800"/></svg>
<span class="t" id="t119" style="top:1414.98px;font-size:24px;line-height:24px;color:#262626;letter-spacing:-0.155px;left:1634.00px;">Not Enabled</span>
<span class="t" id="t120" style="top:1416.68px;font-size:24px;line-height:24px;color:#262626;letter-spacing:-0.203px;left:2003.70px;">23 Apr 2020 03:56:53 PM IST</span>
<span class="t" id="t121" style="top:1416.68px;font-size:24px;line-height:24px;color:#262626;letter-spacing:1.202px;left:2893.00px;">204</span>
<svg class="b" style="left:3270px;top:1414px" width="160" height="30" viewBox="3270 714 160 30" fill="#222"><path d="M3273.500 719h2.600v19.600h19.900v2.600h-22.500z"/><rect x="3278" y="731.500" width="3.800" height="5.700" rx="0.600" fill="#111"/><rect x="3284.200" y="727" width="3.800" height="10.200" rx="0.600" fill="#111"/><rect x="3290.400" y="723" width="3.800" height="14.200" rx="0.600" fill="#111"/><path fill-rule="evenodd" d="M3318.500 718h19.500q2.200 0 2.200 2.200v14.300q0 2.200 -2.200 2.200h-3.300l0.800 2.300h-14.500l0.800 -2.300h-3.300q-2.200 0 -2.200 -2.200v-14.300q0 -2.200 2.200 -2.200zM3318.600 720.200v12.800h19.300v-12.800z"/><path fill="none" stroke="#1c1c1c" stroke-width="2" d="M3376 719h-12q-3 0 -3 3v11q0 3 3 3h11.500q3 0 3 -3v-3"/><path d="M3380.300 717.800l3.800 3.500l-1.900 2.100l-3.800 -3.500zM3377.500 720.900l3.800 3.500l-8.300 8.600l-4.500 1l0.800 -4.500z"/><circle cx="3371.300" cy="731.300" r="1" fill="#fff"/><path fill="none" stroke="#1c1c1c" stroke-width="1.700" d="M3404 722.300h18.700M3409.500 722v-2.400q0 -0.800 0.800 -0.800h6q0.800 0 0.800 0.800v2.400M3406.300 722.500v13.800q0 1.800 1.800 1.800h10.400q1.800 0 1.800 -1.800v-13.800M3410 726v8.500M3413.300 726v8.500M3416.600 726v8.500"/></svg>
<div class="b" style="left:62px;top:1463px;width:3716px;height:2px;background:#e3e3e3;"></div>
<div class="b" style="left:82px;top:1487.3px;width:24px;height:24px;background:#fff;border:1.5px solid #b4b4b4;border-radius:6px;box-sizing:border-box;box-shadow:inset 0 1px 2px rgba(0,0,0,.10);"></div>
<span class="t" id="t122" style="top:1486.68px;font-size:24px;line-height:24px;color:#262626;letter-spacing:-0.434px;left:141.60px;">Swapped Used Memory</span>
<span class="t" id="t123" style="top:1486.68px;font-size:24px;line-height:24px;color:#262626;letter-spacing:-0.161px;left:762.70px;">VIWebService</span>
<span class="t" id="t124" style="top:1486.68px;font-size:24px;line-height:24px;color:#262626;left:1176.70px;">5</span>
<svg class="b" style="left:1590px;top:1481px" width="34" height="34" viewBox="0 0 34 34"><circle cx="17" cy="17" r="17" fill="#878787"/><circle cx="17" cy="17" r="10.500" fill="none" stroke="#e4e4e4" stroke-width="1.800"/><path d="M9.500 10.500L24.500 23.500" stroke="#e4e4e4" stroke-width="1.800"/></svg>
<span class="t" id="t125" style="top:1484.98px;font-size:24px;line-height:24px;color:#262626;letter-spacing:-0.155px;left:1634.00px;">Not Enabled</span>
<span class="t" id="t126" style="top:1486.68px;font-size:24px;line-height:24px;color:#262626;letter-spacing:-0.203px;left:2003.70px;">23 Apr 2020 03:56:53 PM IST</span>
<span class="t" id="t127" style="top:1486.68px;font-size:24px;line-height:24px;color:#262626;left:2894.00px;">0</span>
<svg class="b" style="left:3270px;top:1484px" width="160" height="30" viewBox="3270 714 160 30" fill="#222"><path d="M3273.500 719h2.600v19.600h19.900v2.600h-22.500z"/><rect x="3278" y="731.500" width="3.800" height="5.700" rx="0.600" fill="#111"/><rect x="3284.200" y="727" width="3.800" height="10.200" rx="0.600" fill="#111"/><rect x="3290.400" y="723" width="3.800" height="14.200" rx="0.600" fill="#111"/><path fill-rule="evenodd" d="M3318.500 718h19.500q2.200 0 2.200 2.200v14.300q0 2.200 -2.200 2.200h-3.300l0.800 2.300h-14.500l0.800 -2.300h-3.300q-2.200 0 -2.200 -2.200v-14.300q0 -2.200 2.200 -2.200zM3318.600 720.200v12.800h19.300v-12.800z"/><path fill="none" stroke="#1c1c1c" stroke-width="2" d="M3376 719h-12q-3 0 -3 3v11q0 3 3 3h11.500q3 0 3 -3v-3"/><path d="M3380.300 717.800l3.800 3.500l-1.900 2.100l-3.800 -3.500zM3377.500 720.900l3.800 3.500l-8.300 8.600l-4.500 1l0.800 -4.500z"/><circle cx="3371.300" cy="731.300" r="1" fill="#fff"/><path fill="none" stroke="#1c1c1c" stroke-width="1.700" d="M3404 722.300h18.700M3409.500 722v-2.400q0 -0.800 0.800 -0.800h6q0.800 0 0.800 0.800v2.400M3406.300 722.500v13.800q0 1.800 1.800 1.800h10.400q1.800 0 1.800 -1.800v-13.800M3410 726v8.500M3413.300 726v8.500M3416.600 726v8.500"/></svg>
<div class="b" style="left:62px;top:1533px;width:3716px;height:2px;background:#e3e3e3;"></div>
<div class="b" style="left:82px;top:1557.3px;width:24px;height:24px;background:#fff;border:1.5px solid #b4b4b4;border-radius:6px;box-sizing:border-box;box-shadow:inset 0 1px 2px rgba(0,0,0,.10);"></div>
<span class="t" id="t128" style="top:1556.68px;font-size:24px;line-height:24px;color:#262626;letter-spacing:-0.256px;left:142.60px;">Total Disk Latency</span>
<span class="t" id="t129" style="top:1556.68px;font-size:24px;line-height:24px;color:#262626;letter-spacing:-0.161px;left:762.70px;">VIWebService</span>
<span class="t" id="t130" style="top:1556.68px;font-size:24px;line-height:24px;color:#262626;left:1176.70px;">5</span>
<svg class="b" style="left:1590px;top:1551px" width="34" height="34" viewBox="0 0 34 34"><circle cx="17" cy="17" r="17" fill="#878787"/><circle cx="17" cy="17" r="10.500" fill="none" stroke="#e4e4e4" stroke-width="1.800"/><path d="M9.500 10.500L24.500 23.500" stroke="#e4e4e4" stroke-width="1.800"/></svg>
<span class="t" id="t131" style="top:1554.98px;font-size:24px;line-height:24px;color:#262626;letter-spacing:-0.155px;left:1634.00px;">Not Enabled</span>
<span class="t" id="t132" style="top:1556.68px;font-size:24px;line-height:24px;color:#262626;letter-spacing:-0.203px;left:2003.70px;">23 Apr 2020 03:56:53 PM IST</span>
<span class="t" id="t133" style="top:1556.68px;font-size:24px;line-height:24px;color:#262626;left:2893.00px;">1</span>
<svg class="b" style="left:3270px;top:1554px" width="160" height="30" viewBox="3270 714 160 30" fill="#222"><path d="M3273.500 719h2.600v19.600h19.900v2.600h-22.500z"/><rect x="3278" y="731.500" width="3.800" height="5.700" rx="0.600" fill="#111"/><rect x="3284.200" y="727" width="3.800" height="10.200" rx="0.600" fill="#111"/><rect x="3290.400" y="723" width="3.800" height="14.200" rx="0.600" fill="#111"/><path fill-rule="evenodd" d="M3318.500 718h19.500q2.200 0 2.200 2.200v14.300q0 2.200 -2.200 2.200h-3.300l0.800 2.300h-14.500l0.800 -2.300h-3.300q-2.200 0 -2.200 -2.200v-14.300q0 -2.200 2.200 -2.200zM3318.600 720.200v12.800h19.300v-12.800z"/><path fill="none" stroke="#1c1c1c" stroke-width="2" d="M3376 719h-12q-3 0 -3 3v11q0 3 3 3h11.500q3 0 3 -3v-3"/><path d="M3380.300 717.800l3.800 3.500l-1.900 2.100l-3.800 -3.500zM3377.500 720.900l3.800 3.500l-8.300 8.600l-4.500 1l0.800 -4.500z"/><circle cx="3371.300" cy="731.300" r="1" fill="#fff"/><path fill="none" stroke="#1c1c1c" stroke-width="1.700" d="M3404 722.300h18.700M3409.500 722v-2.400q0 -0.800 0.800 -0.800h6q0.800 0 0.800 0.800v2.400M3406.300 722.500v13.800q0 1.800 1.800 1.800h10.400q1.800 0 1.800 -1.800v-13.800M3410 726v8.500M3413.300 726v8.500M3416.600 726v8.500"/></svg>
<div class="b" style="left:62px;top:1603px;width:3716px;height:60px;background:#ebebeb;border-top:2px solid #cfcfcf;box-sizing:border-box;"></div>
<svg class="b" style="left:70px;top:1612px" width="92" height="42" viewBox="70 1612 92 42" fill="none" stroke="#6a6a6a" stroke-width="2.300" stroke-linecap="round"><path d="M72.800 1623.900h26.200M81.300 1623.500v-3h9.500v3M77 1624.500v21.400h17.700v-21.400M82.800 1629.500v10.800M88.900 1629.500v10.800"/><path stroke="#e0e2e2" stroke-width="3.500" stroke-linecap="butt" d="M114 1615.400v35.300"/><circle cx="139.800" cy="1630.800" r="10.800" stroke-width="2.600"/><path stroke-width="2.700" d="M147.600 1638.600l7.500 7.300"/></svg>
<svg class="b" style="left:1720px;top:1612px" width="310" height="42" viewBox="1720 1612 310 42" fill="#b4b4b4"><rect x="1727.800" y="1623" width="3.900" height="20"/><path d="M1747.800 1621v24l-16.300 -12z"/><path d="M1773 1621v24l-15.800 -12zM1788 1621v24l-15.800 -12z"/><rect x="1796.200" y="1615.300" width="3.800" height="35.300" fill="#e2e2e2"/><rect x="1950.200" y="1615.300" width="3.800" height="35.300" fill="#e2e2e2"/><path d="M1961.800 1621v24l15.800 -12zM1976.800 1621v24l15.800 -12z"/><path d="M2001.800 1621v24l16.300 -12z"/><rect x="2018" y="1623" width="3.900" height="20"/></svg>
<span class="t" id="t134" style="top:1621.18px;font-size:22px;line-height:22px;color:#555;letter-spacing:-0.082px;left:1804.90px;-webkit-text-stroke:0;">Page</span>
<div class="b" style="left:1862.3px;top:1621.6px;width:35.3px;height:24.8px;background:#fff;border:1.500px solid #c9c9c9;box-sizing:border-box;"></div>
<span class="t" id="t135" style="top:1624.26px;font-size:18px;line-height:18px;color:#222;left:1868.00px;-webkit-text-stroke:0;">1</span>
<span class="t" id="t136" style="top:1621.18px;font-size:22px;line-height:22px;color:#555;letter-spacing:-0.920px;left:1904.60px;-webkit-text-stroke:0;">of 1</span>
<div class="b" style="left:2028.3px;top:1614.9px;width:86.2px;height:35.7px;background:#f6f6f6;border:2px solid #a9a9a9;border-radius:9px;box-sizing:border-box;"></div>
<span class="t" id="t137" style="top:1624.73px;font-size:17.8px;line-height:17.8px;color:#111;left:2045.80px;-webkit-text-stroke:0;">50</span>
<svg class="b" style="left:2094px;top:1622px" width="12" height="22" viewBox="0 0 12 22"><path d="M6 2.800L10.200 9.600H1.800zM6 19.200L10.200 12.600H1.800z" fill="#111"/></svg>
<span class="t" id="t138" style="top:1620.68px;font-size:22px;line-height:22px;color:#555;letter-spacing:-0.010px;left:3585.30px;-webkit-text-stroke:0;">View 1 - 13 of 13</span>
</section>
<section>
<span class="t" id="t139" style="top:1767.80px;font-size:28px;line-height:28px;color:#111;letter-spacing:-1.179px;left:118.30px;">How To</span>
<span class="t" id="t140" style="top:1767.80px;font-size:28px;line-height:28px;color:#111;letter-spacing:-1.367px;left:324.50px;">FAQ</span>
<div class="b" style="left:80px;top:1815px;width:166px;height:5px;background:#4abf85;"></div>
<div class="b" style="left:60px;top:1819.5px;width:1400px;height:2px;background:#e8e8e8;"></div>
<div class="b" style="left:1400px;top:1751px;width:60px;height:60px;background:#f95c5c;"></div>
<div class="b" style="left:1415.7px;top:1780.6px;width:30.5px;height:2px;background:#fff;"></div>
<span class="t" id="t141" style="top:1864.64px;font-size:27px;line-height:27px;color:#111;letter-spacing:-0.907px;left:134.00px;">1. How to remove a custom SNMP monitor?</span>
<div class="b" style="left:60px;top:1953px;width:1400px;height:2px;background:#e8e8e8;"></div>
<span class="t" id="t142" style="top:1973.64px;font-size:27px;line-height:27px;color:#3b8fd6;letter-spacing:-1.259px;left:1072.80px;">Roadmap</span>
<div class="b" style="left:1201.5px;top:1975px;width:3.5px;height:25.5px;background:#cfcfcf;"></div>
<span class="t" id="t143" style="top:1973.64px;font-size:27px;line-height:27px;color:#3b8fd6;letter-spacing:-0.695px;left:1224.70px;">Need More Features</span>
</section>
<aside>
<div class="b" style="left:3701px;top:2071px;width:88px;height:62px;background:#36ac6f;"></div>
<div class="b" style="left:3701px;top:2071px;width:88px;height:8px;background:#4abf85;"></div>
<svg class="b" style="left:3720px;top:2084px" width="52" height="49" viewBox="3720 2084 52 49" fill="none" stroke="#d9f1e4" stroke-width="1.900"><path d="M3731 2097v-5q0 -4 4 -4h27q4 0 4 4v15q0 4 -4 4h-2"/><path d="M3728 2098.500h27q4 0 4 4v14.500q0 4 -4 4h-15l-7.500 9l-1 -9h-3.500q-4 0 -4 -4v-14.500q0 -4 4 -4z"/><path stroke-width="2.200" d="M3731.500 2105.600h11M3731.500 2110.300h21M3731.500 2114.900h21"/></svg>
</aside>
</body></html>
